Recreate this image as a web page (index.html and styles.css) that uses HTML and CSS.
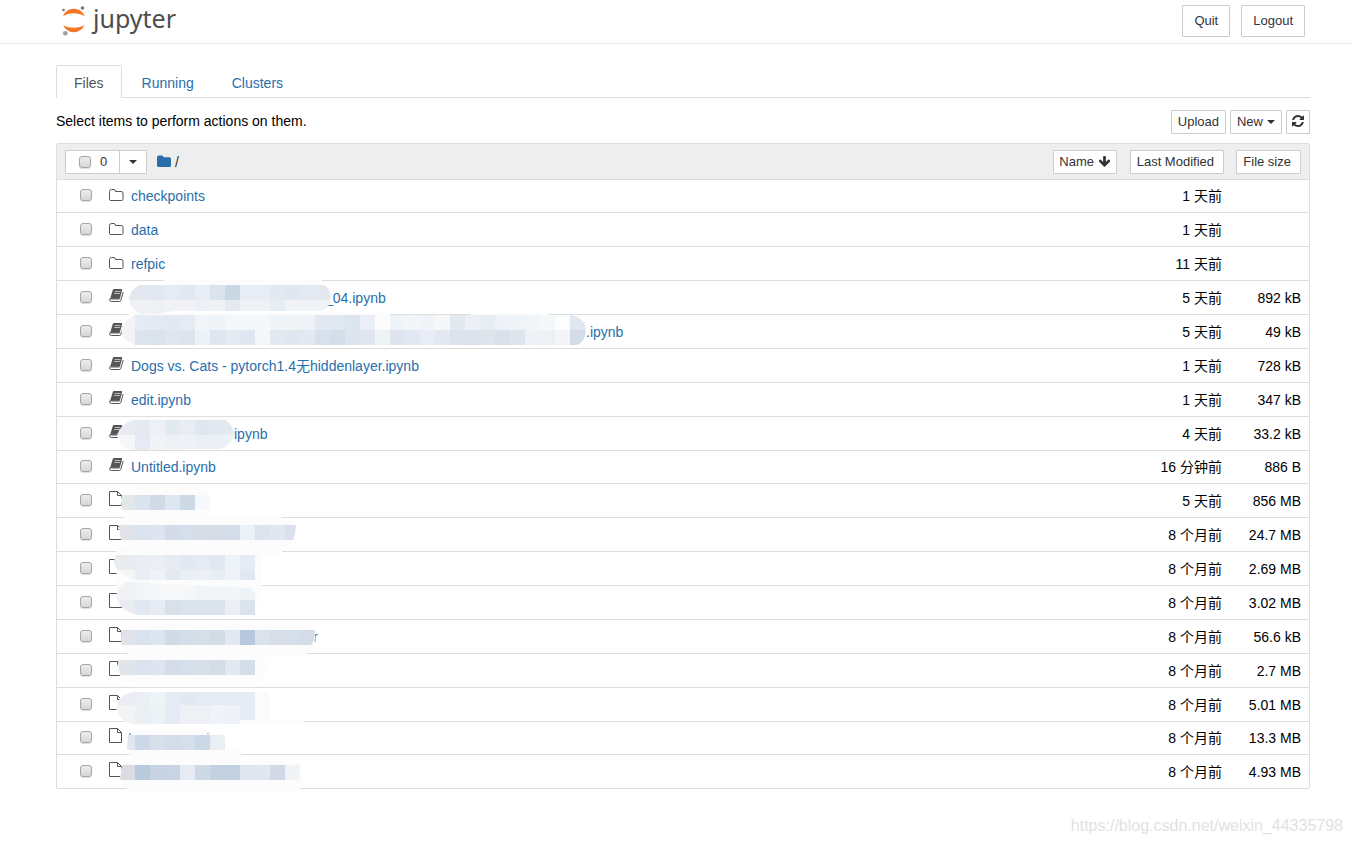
FILE: index.html
```html
<!DOCTYPE html>
<html lang="en">
<head>
    <meta charset="UTF-8">
    <meta name="viewport" content="width=device-width, initial-scale=1.0">
    <link rel="stylesheet" href="styles.css">
    <title>Home</title>
</head>
<body>
    <svg class="icon-defs" aria-hidden="true">
        <symbol id="icon-folder-o" viewBox="0 0 15 13">
            <path d="M.5 10.500V2.500Q.5.500 2.500.500h2.500Q6.500.500 6.500 2.500h5.500Q14 2.500 14 4v6.500Q14 11.500 12.500 11.500H2Q.5 11.500.5 10.500z" fill="none" stroke="currentColor"/>
        </symbol>
        <symbol id="icon-folder" viewBox="0 0 15 13">
            <path d="M0 10.500V2.200Q0 .5 1.700.5h3Q6.500.5 6.500 2.200h5.800Q14 2.200 14 3.900v6.600Q14 12 12.300 12H1.700Q0 12 0 10.500z" fill="currentColor"/>
        </symbol>
        <symbol id="icon-book" viewBox="0 0 15 14">
            <path d="M5 0H12.200Q13.400 0 13.100 1.300L10.900 9.500H1.200L3.700 1.200Q4 0 5 0z" fill="currentColor"/>
            <path d="M1.200 9.300Q.2 11 1 12.100Q1.400 12.500 2.300 12.500H10.500Q11.400 12.500 11.700 11.700L14.200 3" fill="none" stroke="currentColor"/>
            <path d="M1.200 9.300H10.900L10.300 10.500H1.500z" fill="currentColor"/>
            <path d="M5.600 2.500H11.500M5.200 4.500H11" stroke="#bbb"/>
        </symbol>
        <symbol id="icon-file" viewBox="0 0 15 16">
            <path d="M.5.500H8.500L12.500 4.500V14.500H.5zM8.500.5V4.500H12.500" fill="none" stroke="currentColor"/>
        </symbol>
    </svg>

    <header class="header">
        <a class="logo" href="#">
            <svg width="26" height="32" viewBox="0 0 26 32" aria-hidden="true">
                <path d="M2 11Q5 3.700 12.700 3.700T23.700 11Q19 8.300 12.700 8.300T2 11z" fill="#f37726"/>
                <path d="M2 20Q6 22.700 12.700 22.700T23.700 20Q20 27.300 12.700 27.300T2 20z" fill="#f37726"/>
                <circle cx="2.500" cy="5" r="1.300" fill="#767677"/>
                <circle cx="21.500" cy="3" r="1.800" fill="#767677"/>
                <circle cx="4.300" cy="28.300" r="2.300" fill="#9e9e9e"/>
            </svg>
            <span>jupyter</span>
        </a>
        <div class="header-buttons">
            <button class="btn">Quit</button>
            <button class="btn">Logout</button>
        </div>
    </header>

    <main class="container">
        <nav class="tabs">
            <a class="tab active" href="#">Files</a>
            <a class="tab" href="#">Running</a>
            <a class="tab" href="#">Clusters</a>
        </nav>

        <div class="toolbar">
            <p>Select items to perform actions on them.</p>
            <div class="toolbar-buttons">
                <button class="btn btn-xs">Upload</button>
                <button class="btn btn-xs">New <span class="caret"></span></button>
                <button class="btn btn-xs btn-refresh" aria-label="Refresh">
                    <svg width="12" height="14" viewBox="0 0 1536 1792" fill="currentColor" aria-hidden="true"><path d="M1511 928q0 5-1 7-64 268-268 434.500t-478 166.500q-146 0-282.500-55t-243.500-157l-129 129q-19 19-45 19t-45-19-19-45v-448q0-26 19-45t45-19h448q26 0 45 19t19 45-19 45l-137 137q71 66 161 102t187 36q134 0 250-65t186-179q11-17 53-117 8-23 30-23h192q13 0 22.500 9.500t9.500 22.500zm25-800v448q0 26-19 45t-45 19h-448q-26 0-45-19t-19-45 19-45l138-138q-148-137-349-137-134 0-250 65t-186 179q-11 17-53 117-8 23-30 23h-199q-13 0-22.500-9.500t-9.500-22.500v-7q65-268 270-434.500t480-166.500q146 0 284 55.500t245 156.500l130-129q19-19 45-19t45 19 19 45z"/></svg>
                </button>
            </div>
        </div>

        <div class="list">
            <table class="files">
                <thead>
                    <tr>
                        <th>
                            <div class="list-header">
                                <div class="selector">
                                    <label class="select-all"><input type="checkbox" class="check"> <span>0</span></label>
                                    <button class="btn btn-drop" aria-label="Select"><span class="caret"></span></button>
                                </div>
                                <a class="crumb" href="#" aria-label="Root folder"><svg width="15" height="13" aria-hidden="true"><use href="#icon-folder"/></svg></a>
                                <span class="slash">/</span>
                                <button class="btn btn-xs sort-name">Name
                                    <svg width="13" height="13" viewBox="0 0 1792 1792" fill="currentColor" aria-hidden="true"><path d="M1675 832q0 53-37 90l-651 652q-39 37-91 37-53 0-90-37l-651-652q-38-36-38-90 0-53 38-91l74-75q39-37 91-37 53 0 90 37l294 294v-704q0-52 38-90t90-38h128q52 0 90 38t38 90v704l294-294q37-37 90-37 52 0 91 37l75 75q37 39 37 91z"/></svg>
                                </button>
                            </div>
                        </th>
                        <th class="col-modified"><button class="btn btn-xs btn-sort">Last Modified</button></th>
                        <th class="col-size"><button class="btn btn-xs btn-sort">File size</button></th>
                    </tr>
                </thead>
                <tbody id="files"></tbody>
            </table>
            <svg id="mosaic" class="mosaic" width="500" height="520" viewBox="100 280 500 520" aria-hidden="true"></svg>
        </div>
    </main>

    <footer class="footer">https://blog.csdn.net/weixin_44335798</footer>

    <script src="script.js"></script>
</body>
</html>
```
FILE: styles.css
```css
* {
    box-sizing: border-box;
}

body {
    margin: 0;
    background-color: #fff;
    color: #000;
    font-family: "Liberation Sans", Arial, "Noto Sans CJK SC", sans-serif;
    font-size: 14px;
    line-height: 20px;
}

a {
    color: #296eaa;
    text-decoration: none;
}

.icon-defs {
    display: none;
}

.header {
    display: flex;
    justify-content: space-between;
    align-items: flex-start;
    height: 44px;
    padding: 5px 47px 0 61px;
    border-bottom: 1px solid #e7e7e7;
}

.logo {
    display: flex;
    gap: 6px;
    color: #4e4e4e;
    font-family: "Noto Sans", "Open Sans", sans-serif;
    font-size: 25px;
    line-height: 26px;
}

.header-buttons {
    display: flex;
    gap: 11px;
}

.btn {
    display: inline-flex;
    align-items: center;
    justify-content: center;
    gap: 4px;
    height: 32px;
    padding: 0 11px;
    border: 1px solid #ccc;
    border-radius: 1px;
    background-color: #fff;
    color: #333;
    font-family: inherit;
    font-size: 13px;
    line-height: 20px;
    white-space: nowrap;
    cursor: pointer;
}

.btn:hover {
    background-color: #e6e6e6;
}

.btn-xs {
    height: 24px;
    padding: 0 6px;
}

.btn-refresh,
.sort-name {
    padding: 0 5px;
}

.caret {
    border-top: 4px solid #333;
    border-left: 4px solid transparent;
    border-right: 4px solid transparent;
}

.container {
    padding: 21px 42px 0 56px;
}

.tabs {
    display: flex;
    gap: 2px;
    height: 33px;
    border-bottom: 1px solid #ddd;
}

.tab {
    height: 33px;
    padding: 7px 17px;
    border: 1px solid transparent;
}

.tab.active {
    border-color: #ddd;
    border-bottom-color: #fff;
    border-radius: 2px 2px 0 0;
    background-color: #fff;
    color: #555;
}

.toolbar {
    display: flex;
    justify-content: space-between;
    padding: 12px 0 9px;
}

.toolbar p {
    margin: 0;
    line-height: 22px;
}

.toolbar-buttons {
    display: flex;
    gap: 4px;
}

.list {
    position: relative;
}

.files {
    width: 100%;
    border: 1px solid #ddd;
    border-radius: 2px;
    border-spacing: 0;
}

.files th {
    height: 35px;
    padding: 0;
    background-color: #eee;
    font-weight: normal;
    text-align: right;
}

.files td {
    height: 34px;
    padding: 0 2px 0 0;
    border-top: 1px solid #ddd;
    text-align: right;
    white-space: nowrap;
}

/* rows average slightly under 34px */
.files tbody tr:nth-child(8n+1) td {
    height: 33px;
}

.files .col-modified {
    width: 107px;
}

.files .col-size {
    width: 85px;
    padding-right: 8px;
}

.btn-sort {
    padding-right: 9px;
}

.list-header {
    display: flex;
    align-items: center;
    padding-left: 8px;
}

.selector {
    display: flex;
    margin-right: 10px;
}

.select-all {
    display: flex;
    align-items: center;
    gap: 9px;
    width: 55px;
    height: 24px;
    padding-left: 13px;
    border: 1px solid #ccc;
    background-color: #fff;
    color: #333;
    font-size: 13px;
}

.btn-drop {
    width: 28px;
    height: 24px;
    margin-left: -1px;
    padding: 0;
}

.check {
    appearance: none;
    flex: none;
    width: 12px;
    height: 12px;
    margin: 0;
    border: 1px solid #a6a6a6;
    border-radius: 3px;
    background: linear-gradient(#ececec, #d8d8d8);
    box-shadow: 0 1px 1px #ddd;
}

.check:checked {
    background: #296eaa;
}

.crumb {
    display: flex;
    margin-right: 3px;
}

.slash {
    color: #333;
}

.sort-name {
    margin-left: auto;
}

.item {
    display: flex;
    align-items: center;
    padding-left: 23px;
}

.item .check {
    margin-bottom: 2px;
}

.item-icon {
    width: 15px;
    margin: 0 7px 0 17px;
    color: #555;
}

.item-icon.folder-o {
    margin-bottom: 1px;
}

.item-icon.book,
.item-icon.file {
    margin-bottom: 4px;
}

.mosaic {
    position: absolute;
    top: 137px;
    left: 44px;
    pointer-events: none;
}

.footer {
    padding: 27px 9px 0;
    color: #e2e2e2;
    font-size: 16px;
    text-align: right;
}
```
FILE: script.js
```js
// offset = width of the blurred part before the visible end of the name
const files = [
    { icon: 'folder-o', name: 'checkpoints', modified: '1 天前', size: '' },
    { icon: 'folder-o', name: 'data', modified: '1 天前', size: '' },
    { icon: 'folder-o', name: 'refpic', modified: '11 天前', size: '' },
    { icon: 'book', name: '_04.ipynb', offset: 194, modified: '5 天前', size: '892 kB' },
    { icon: 'book', name: '.ipynb', offset: 455, modified: '5 天前', size: '49 kB' },
    { icon: 'book', name: 'Dogs vs. Cats - pytorch1.4无hiddenlayer.ipynb', modified: '1 天前', size: '728 kB' },
    { icon: 'book', name: 'edit.ipynb', modified: '1 天前', size: '347 kB' },
    { icon: 'book', name: 'ipynb', offset: 103, modified: '4 天前', size: '33.2 kB' },
    { icon: 'book', name: 'Untitled.ipynb', modified: '16 分钟前', size: '886 B' },
    { icon: 'file', name: '', modified: '5 天前', size: '856 MB' },
    { icon: 'file', name: '', modified: '8 个月前', size: '24.7 MB' },
    { icon: 'file', name: '', modified: '8 个月前', size: '2.69 MB' },
    { icon: 'file', name: '', modified: '8 个月前', size: '3.02 MB' },
    { icon: 'file', name: 'r', offset: 182, modified: '8 个月前', size: '56.6 kB' },
    { icon: 'file', name: '', modified: '8 个月前', size: '2.7 MB' },
    { icon: 'file', name: '', modified: '8 个月前', size: '5.01 MB' },
    { icon: 'file', name: '', modified: '8 个月前', size: '13.3 MB' },
    { icon: 'file', name: '', modified: '8 个月前', size: '4.93 MB' }
];

const iconHeights = { 'folder-o': 13, book: 14, file: 16 };

document.getElementById('files').innerHTML = files.map((file, i) => `
    <tr>
        <td><div class="item">
            <input type="checkbox" class="check" id="file${i}" aria-label="Select file ${i + 1}">
            <svg class="item-icon ${file.icon}" height="${iconHeights[file.icon]}" aria-hidden="true"><use href="#icon-${file.icon}"/></svg>
            ${file.name ? `<a href="#" style="padding-left: ${file.offset || 0}px">${file.name}</a>` : ''}
        </div></td>
        <td class="col-modified">${file.modified}</td>
        <td class="col-size">${file.size}</td>
    </tr>`).join('');

// white smears: path data
const smears = [
    'M164 279H322V286H164z',
    'M129 312H156V316H129z',
    'M136 313H390V316H136z M470 313H549V316H470z',
    'M121 501Q121 487 140 486H195Q210 489 210 501V517H280Q296 521 296 533Q292 549 276 549H282V554H262V589Q260 615 235 613H150Q121 611 117 598V588L116 548Q122 545 135 545Q121 542 119 533Q119 520 127 514Q121 510 121 501z',
    'M121 637Q123 625 140 624H300Q315 628 315 637Q315 652 303 655H258Q267 657 267 667Q264 684 250 684H135Q121 682 117 670Q117 656 129 654Q121 650 121 637z',
    'M117 707Q119 692 135 692H269V720H303V723H270L140 725Q121 726 117 707z',
    'M126 742Q128 729 145 729H200L225 735V750H241V761H285L300 764V780H303V785Q297 794 285 793H135Q121 789 120 775Q121 762 132 761Q129 756 129 750Q126 748 126 742z'
];

// pixelated areas, every cell is 15px wide and starts at column x
const areas = [
    { clip: 'M140 285H324Q331 289 331 298Q329 311 318 311H174L156 314H140Q129 307 129 298Q131 288 140 285z', x: 120, strips: [
        [285, 15, 'e3e8ef e3e8ef e1e8f1 e5ebf3 e1e8f1 e8edf5 dae3ee cad8e6 e8ecf4 e8ecf4 e3e8f1 e0e7f0 e4eaf1 e3e8f1 e9eef4'],
        [300, 15, 'eff1f5 eff1f5 edf0f5 f0f2f6 f0f2f6 edf1f7 eef2f7 e5e9f1 eef1f6 eef1f6 e7edf4 f0f2f6 eff2f6 eff2f6 f0f2f6']] },
    { clip: 'M135 315H572Q586 319 586 331Q584 345 575 345H135Q122 340 121 330Q124 320 135 315z', x: 120, strips: [
        [315, 15, 'f1f3f6 e4ebf3 e3eaf2 e1e9f1 e4ebf3 f1f5f8 eff4f8 f4f8fb f4f8fb f4f8fb eff4f8 f1f4f7 eff2f6 e1e8f1 e0e9f1 dbe6ef e9eff4 fcfcfc eff4f8 f2f6f9 f0f3f7 f6f7f9 e1e9f1 ecf0f5 e8edf3 eef2f6 eef4f7 f1f5f8 f4f8fa fcfdfd e1e7f0 e9edf3'],
        [330, 15, 'f1f3f6 dce4ed dae2eb dfe6ef dce4ee edf2f8 dfe6ef e4eaf2 e1e7f0 f4f7f9 e3e8f1 e1e7f0 e3e8f1 d6e1ec d2deea dce4ee e0e6ef f0f3f6 dfe5ee e2e8f1 e8ecf6 e3e8f1 dbe3ee dce2ec dfe4ed dae1eb dde5ee eef2f6 edf1f5 f3f5f7 d3dde9 e3e9f1']] },
    { clip: 'M132 420H226Q234 427 234 435Q232 445 220 449H207L150 450H130Q119 447 117 435Q120 425 132 420z', x: 105, strips: [
        [420, 15, 'e8ebef e8ebef e5eaf2 edf1f7 e2eaf1 e9edf2 dfe8f0 e2e8ef e5e9f1'],
        [435, 15, 'f6f6f7 f5f6f7 e5eaf3 f1f3f7 edf0f5 eef1f7 ebeff6 ebeff6 eef1f6']] },
    { clip: 'M122 495H210V510H122z', x: 120, strips: [
        [495, 15, 'e2e7ea d9e4ed d1dbe7 dde7ef ced9e6 f5f8fc']] },
    { clip: 'M119 525H296Q296 533 293 540H121z', x: 105, strips: [
        [525, 15, 'e0e3e9 e0e3e9 dae3ee dee5f0 d3dae8 d3dfec d6dde7 d3dce7 d3dde9 ebf1f6 dde4ee e0e7f0 d9e1ec f0f4f7']] },
    { clip: 'M115 555H255V580H135Q116 573 114 563z', x: 105, strips: [
        [555, 15, 'e9ebec e9ecef e8eef3 ebeff3 e7ecf1 e1eaf2 e4ebf3 e1e8f2 eef3f7 e6eaf3'],
        [570, 10, 'f4f5f6 f3f5f7 e8eef4 eff3f8 e5e9f2 eaeff4 eceff4 e9eef4 eff2f6 e0e8f2']] },
    { clip: 'M127 582L250 588L256 594V615H138Q119 611 116 596Q119 584 127 582z', x: 105, strips: [
        [580, 20, 'f1f2f4 f0f2f5 f3f5f7 f6f7f8 f7f8f9 f5f7f8 f1f5f8 f1f5f8 f1f5f8 edf2f7'],
        [600, 15, 'eef1f5 e8ebf0 e1e8f2 e6ebf4 d8e0e9 dbe3ed dbe3ed dbe4ed ebeff5 dae2eb']] },
    { clip: 'M121 630H315L314 640L311 645H122z', x: 120, strips: [
        [630, 15, 'e0e4ea dae2ed dde5f0 d1dbe6 d2dfeb d6dee8 d2dce7 e2e8f1 b6c7de dae2ec d7dee8 d3dfeb d4dde7']] },
    { clip: 'M118 660H255V675H120z', x: 105, strips: [
        [660, 15, 'e1e2e5 e1e4e9 dce3ee dee5f0 d4dce7 d3dfeb d7dfe8 d4dde7 e2e7f0 d3dee9']] },
    { clip: 'M134 692H269V720H240V724H140Q121 726 116 708Q121 693 134 692z', x: 105, strips: [
        [692, 13, 'ebedf2 ebedf2 eaf0f5 eff4f7 e7ecf4 e3e9f0 e6ebf3 e6ebf3 e6ebf3 e6ecf4 fafbfd'],
        [705, 19, 'f2f3f4 f1f3f5 ebf0f5 edf2f6 e5eaf4 eef0f4 edf0f4 f0f3f7 eef2f6 e5eaf4 fafbfd']] },
    { clip: 'M128 735H225V750H127z', x: 120, strips: [
        [735, 15, 'e2e7ee ccd8e7 d6dfea d2dde9 d5dfea cbd8e7 eaeff4']] },
    { clip: 'M122 765H300V780H120z', x: 120, strips: [
        [765, 15, 'd9dde3 b8cbdd c7d3e3 c8d3e3 e6ebf4 cdd9e4 c4d1e1 c3d1e2 dfe6f0 e1e7f0 d2d9e6 f1f4f7']] }
];

let shapes = smears.map(d => `<path d="${d}" fill="#fcfcfc"/>`).join('');

areas.forEach((area, i) => {
    shapes += `<clipPath id="area${i}"><path d="${area.clip}"/></clipPath><g clip-path="url(#area${i})" shape-rendering="crispEdges">`;
    for (const [y, height, colors] of area.strips) {
        colors.split(' ').forEach((color, n) => {
            shapes += `<rect x="${area.x + n * 15}" y="${y}" width="15" height="${height}" fill="#${color}"/>`;
        });
    }
    shapes += '</g>';
});

// bits of letters left above the blur
shapes += '<path d="M130 733v2M208 733v1" stroke="#296eaa"/>';

document.getElementById('mosaic').innerHTML = shapes;
```
